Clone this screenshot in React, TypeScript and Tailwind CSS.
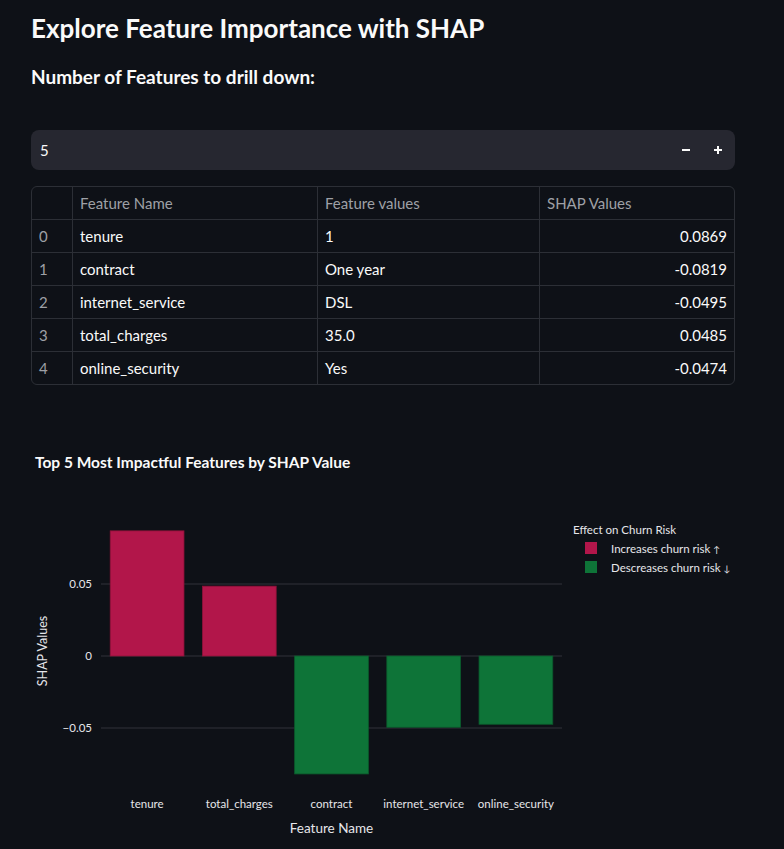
import React from "react";

const FONT = { fontFamily: "Lato, 'Noto Sans', sans-serif" };

const rows = [
  { i: 0, name: "tenure", val: "1", shap: "0.0869" },
  { i: 1, name: "contract", val: "One year", shap: "-0.0819" },
  { i: 2, name: "internet_service", val: "DSL", shap: "-0.0495" },
  { i: 3, name: "total_charges", val: "35.0", shap: "0.0485" },
  { i: 4, name: "online_security", val: "Yes", shap: "-0.0474" },
];

const bars = [
  { label: "tenure", v: 0.0869 },
  { label: "total_charges", v: 0.0485 },
  { label: "contract", v: -0.0819 },
  { label: "internet_service", v: -0.0495 },
  { label: "online_security", v: -0.0474 },
];

const RED = "#b2164a";
const GREEN = "#0e7438";

function Chart() {
  const x0 = 70;
  const x1 = 531;
  const y0 = 225;
  const k = 1440;
  const cw = (x1 - x0) / 5;
  const bw = cw * 0.8;
  return (
    <svg width={704} height={419} className="block" style={FONT}>
      <text x={4} y={37} fill="#fafafa" fontSize={15.5} fontWeight={700}>
        Top 5 Most Impactful Features by SHAP Value
      </text>
      {[0.05, 0, -0.05].map((t) => (
        <g key={t}>
          <line x1={x0} x2={x1} y1={y0 - t * k} y2={y0 - t * k} stroke="#31333b" strokeWidth={1} />
          <text x={61} y={y0 - t * k + 4} textAnchor="end" fill="#e6e6ea" fontSize={11.5}>
            {t === 0 ? "0" : t > 0 ? "0.05" : "\u22120.05"}
          </text>
        </g>
      ))}
      {bars.map((b, i) => {
        const cx = x0 + cw * (i + 0.5);
        const h = Math.abs(b.v) * k;
        const top = b.v > 0 ? y0 - h : y0;
        const fill = b.v > 0 ? RED : GREEN;
        return (
          <g key={b.label}>
            <rect
              x={cx - bw / 2}
              y={top}
              width={bw}
              height={h}
              fill={fill}
              stroke={b.v > 0 ? "#8e1239" : "#0b5a2c"}
              strokeWidth={0.8}
            />
            <text x={cx} y={377} textAnchor="middle" fill="#e6e6ea" fontSize={11.5}>
              {b.label}
            </text>
          </g>
        );
      })}
      <text x={(x0 + x1) / 2} y={402} textAnchor="middle" fill="#e6e6ea" fontSize={13.5}>
        Feature Name
      </text>
      <text
        x={0}
        y={0}
        transform="translate(15.5 220) rotate(-90)"
        textAnchor="middle"
        fill="#e6e6ea"
        fontSize={12.5}
      >
        SHAP Values
      </text>
      <text x={542} y={103} fill="#e6e6ea" fontSize={11.5}>
        Effect on Churn Risk
      </text>
      <rect x={554} y={111} width={12} height={12} fill={RED} />
      <text x={580} y={122} fill="#e6e6ea" fontSize={11.5}>
        Increases churn risk <tspan fontSize={9}>{"\u2191"}</tspan>
      </text>
      <rect x={554} y={130} width={12} height={12} fill={GREEN} />
      <text x={580} y={141} fill="#e6e6ea" fontSize={11.5}>
        Descreases churn risk <tspan fontSize={9}>{"\u2193"}</tspan>
      </text>
    </svg>
  );
}

export default function App() {
  return (
    <div className="min-h-[849px] w-full bg-[#0e1117] text-[#fafafa]" style={FONT}>
      <div className="w-[704px] ml-[31px] flex flex-col">
        <h1 className="mt-[12px] text-[26px] leading-[32px] font-bold">Explore Feature Importance with SHAP</h1>
        <h3 className="mt-[20px] text-[19px] leading-[26px] font-bold">Number of Features to drill down:</h3>
        <div className="mt-[40px] h-[40px] rounded-lg bg-[#262730] flex items-center pl-[9px] pr-[1px]">
          <span className="flex-1 text-[15px]">5</span>
          <button className="w-[32px] h-[32px] flex items-center justify-center">
            <svg width="10" height="10" viewBox="0 0 10 10">
              <line x1="1" y1="5" x2="9" y2="5" stroke="#fafafa" strokeWidth="2" />
            </svg>
          </button>
          <button className="w-[32px] h-[32px] flex items-center justify-center">
            <svg width="10" height="10" viewBox="0 0 10 10">
              <line x1="1" y1="5" x2="9" y2="5" stroke="#fafafa" strokeWidth="2" />
              <line x1="5" y1="1" x2="5" y2="9" stroke="#fafafa" strokeWidth="2" />
            </svg>
          </button>
        </div>
        <div className="mt-[16px] rounded-md border border-[#2c2f36] overflow-hidden text-[15px]">
          <div className="grid grid-cols-[41px_245px_222px_194px] h-[32px] items-stretch text-[#9ea0a6]">
            <div className="border-r border-[#2c2f36]" />
            <div className="border-r border-[#2c2f36] px-[7px] flex items-center">Feature Name</div>
            <div className="border-r border-[#2c2f36] px-[7px] flex items-center">Feature values</div>
            <div className="px-[7px] flex items-center">SHAP Values</div>
          </div>
          {rows.map((r) => (
            <div key={r.i} className="grid grid-cols-[41px_245px_222px_194px] h-[33px] border-t border-[#2c2f36]">
              <div className="border-r border-[#2c2f36] px-[7px] flex items-center text-[#9ea0a6]">{r.i}</div>
              <div className="border-r border-[#2c2f36] px-[7px] flex items-center">{r.name}</div>
              <div className="border-r border-[#2c2f36] px-[7px] flex items-center">{r.val}</div>
              <div className="px-[7px] flex items-center justify-end">{r.shap}</div>
            </div>
          ))}
        </div>
        <div className="mt-[46px]">
          <Chart />
        </div>
      </div>
    </div>
  );
}
